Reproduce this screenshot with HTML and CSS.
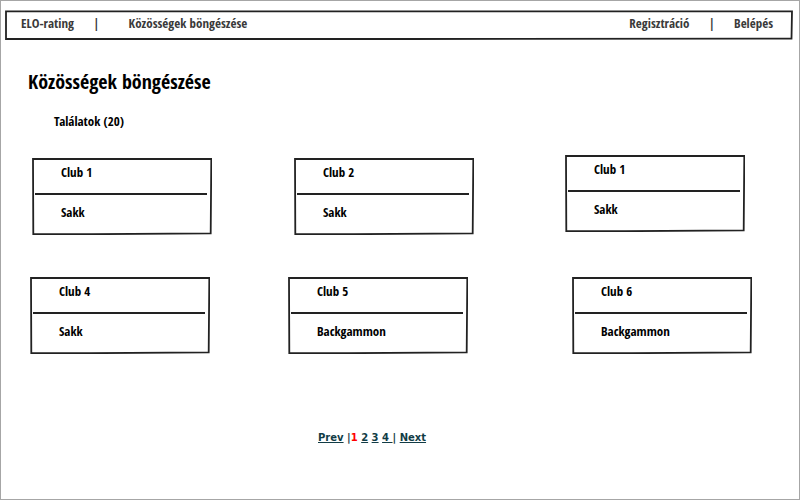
FILE: index.html
```
<!DOCTYPE html>
<html lang="hu">
<head>
<meta charset="utf-8">
<meta name="viewport" content="width=device-width, initial-scale=1">
<title>Közösségek böngészése</title>
<link rel="stylesheet" href="styles.css">
</head>
<body>
<svg class="defs" aria-hidden="true">
  <symbol id="card-frame" viewBox="0 0 180 77" preserveAspectRatio="none">
    <path d="M1 1H179.3L178.7 75.3L60 76.2L1.3 76Z"/>
    <path d="M3 36H175"/>
  </symbol>
</svg>
<header class="topbar">
  <svg class="frame" viewBox="0 0 788 30" preserveAspectRatio="none" aria-hidden="true"><path d="M1 1.300H787L786.500 28.500L400 29L1 29Z"/></svg>
  <nav class="links">
    <a href="#">ELO-rating</a>
    <span class="bar">|</span>
    <a class="browse" href="#">Közösségek böngészése</a>
  </nav>
  <nav class="links">
    <a href="#">Regisztráció</a>
    <span class="bar">|</span>
    <a href="#">Belépés</a>
  </nav>
</header>
<main>
  <h1>Közösségek böngészése</h1>
  <h2>Találatok (20)</h2>
  <section class="row first">
    <article class="card"><svg class="frame" aria-hidden="true"><use href="#card-frame"/></svg><h3>Club 1</h3><p>Sakk</p></article>
    <article class="card"><svg class="frame" aria-hidden="true"><use href="#card-frame"/></svg><h3>Club 2</h3><p>Sakk</p></article>
    <article class="card"><svg class="frame" aria-hidden="true"><use href="#card-frame"/></svg><h3>Club 1</h3><p>Sakk</p></article>
  </section>
  <section class="row second">
    <article class="card"><svg class="frame" aria-hidden="true"><use href="#card-frame"/></svg><h3>Club 4</h3><p>Sakk</p></article>
    <article class="card"><svg class="frame" aria-hidden="true"><use href="#card-frame"/></svg><h3>Club 5</h3><p>Backgammon</p></article>
    <article class="card"><svg class="frame" aria-hidden="true"><use href="#card-frame"/></svg><h3>Club 6</h3><p>Backgammon</p></article>
  </section>
  <nav class="pager"><a href="#">Prev</a> |<span class="current">1</span> <a href="#">2</a> <a href="#">3</a> <a href="#">4&nbsp;</a>| <a href="#">Next</a></nav>
</main>
</body>
</html>
```
FILE: styles.css
```
* {
  box-sizing: border-box;
}

body {
  margin: 0;
  min-height: 100vh;
  padding: 9px 6px 20px 4px;
  border: 1px solid #a6a6a6;
  background: #fff;
  color: #000;
  font: 500 13px/20px "Open Sans Condensed", "Roboto Condensed", "Noto Sans", sans-serif;
}

h1, h2, h3, p {
  margin: 0;
}

.defs {
  position: absolute;
  width: 0;
  height: 0;
}

.frame {
  position: absolute;
  inset: 0;
  width: 100%;
  height: 100%;
  overflow: visible;
  fill: none;
  stroke: #222;
  stroke-width: 1.8px;
  pointer-events: none;
}

.topbar {
  position: relative;
  display: flex;
  justify-content: space-between;
  padding: 3px 20px 7px 16px;
  color: #3a3a3a;
}

.links {
  display: flex;
  gap: 19px;
}

.links a {
  color: inherit;
  text-decoration: none;
}

.browse {
  margin-left: 10px;
}

h1 {
  margin: 26px 0 0 23px;
  font-size: 20px;
  line-height: 32px;
  font-weight: 500;
}

h2 {
  margin: 13px 0 0 49px;
  font-size: 13px;
  line-height: 20px;
  font-weight: 500;
}

.row {
  display: grid;
  align-items: end;
}

.first {
  min-height: 80px;
  margin-top: 24px;
  padding-left: 27px;
  grid-template-columns: 262fr 271fr 228fr;
}

.first .card:last-child {
  align-self: start;
}

.second {
  margin-top: 42px;
  padding-left: 25px;
  grid-template-columns: 258fr 284fr 221fr;
}

.card {
  position: relative;
  width: 180px;
  padding: 4px 0 13px 29px;
}

.card h3, .card p {
  font-size: 13px;
  line-height: 20px;
  font-weight: 500;
}

.card p {
  margin-top: 20px;
}

.pager {
  margin: 75px 0 0 313px;
  color: #123c46;
  font: bold 10px/18px "DejaVu Sans", sans-serif;
}

.pager a {
  color: inherit;
}

.current {
  color: #f00;
}
```
